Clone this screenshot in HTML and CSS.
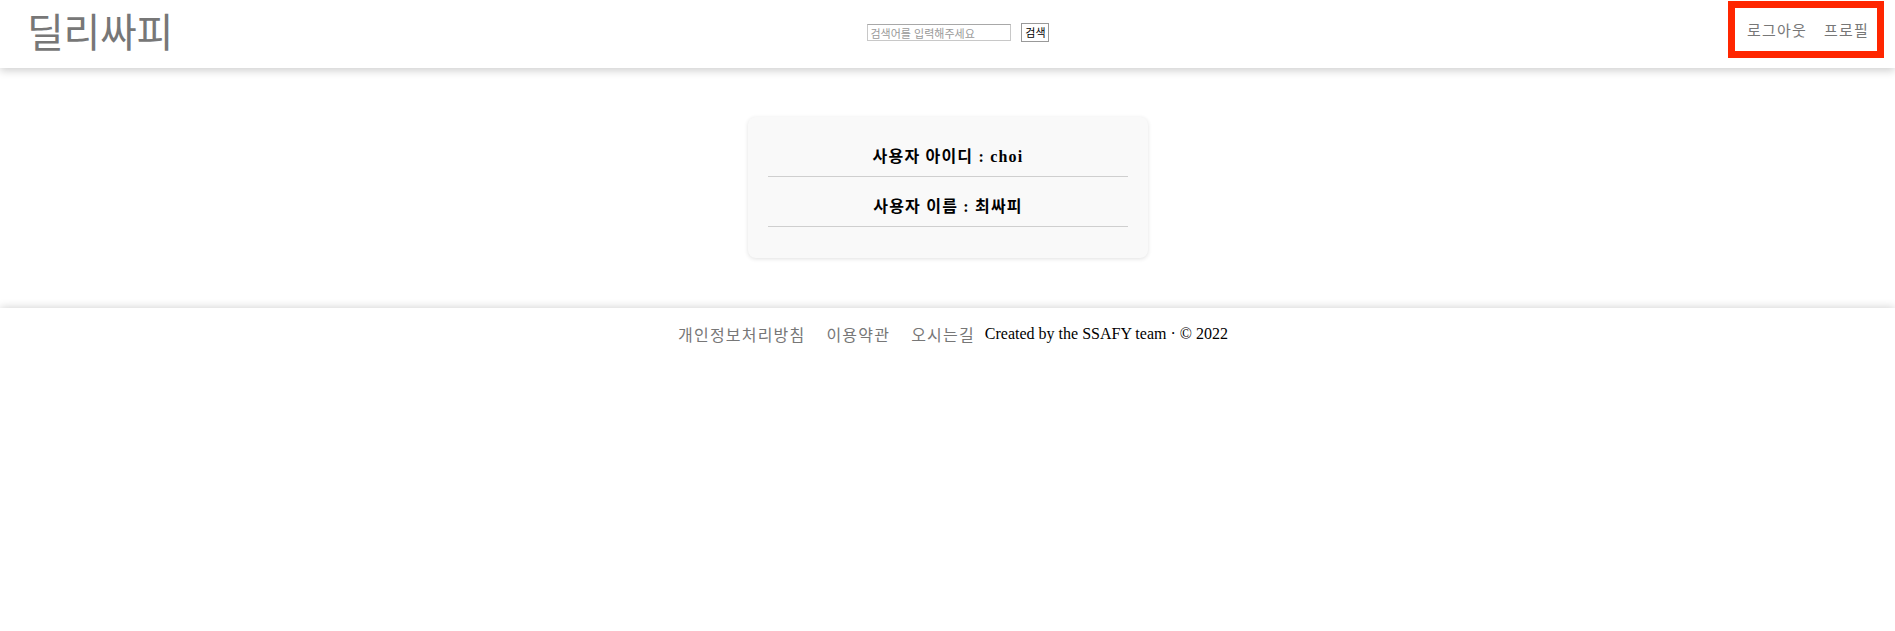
FILE: index.html
```html
<!DOCTYPE html>
<html lang="ko">
<head>
<meta charset="utf-8">
<title>딜리싸피</title>
<link rel="stylesheet" href="styles.css">
</head>
<body>
<header class="header">
  <a class="logo" href="#">딜리싸피</a>
  <form class="search">
    <input class="search-input" type="text" placeholder="검색어를 입력해주세요">
    <button class="search-btn" type="button">검색</button>
  </form>
  <nav class="nav">
    <a class="nav-link" href="#">로그아웃</a>
    <a class="nav-link" href="#">프로필</a>
  </nav>
</header>
<main class="main">
  <section class="card">
    <h3 class="card-row">사용자 아이디 : choi</h3>
    <h3 class="card-row">사용자 이름 : 최싸피</h3>
  </section>
</main>
<footer class="footer">
  <div class="footer-inner">
    <a class="footer-link" href="#">개인정보처리방침</a>
    <a class="footer-link" href="#">이용약관</a>
    <a class="footer-link" href="#">오시는길</a>
    <span class="copy">Created by the SSAFY team · © 2022</span>
  </div>
</footer>
</body>
</html>
```
FILE: styles.css
```css
* { box-sizing: border-box; }
html, body { margin: 0; padding: 0; background: #fff; }
body { font-family: "Liberation Serif", "Noto Sans CJK KR", serif; color: #000; }
a { text-decoration: none; }

.header {
  height: 68px;
  display: flex;
  align-items: center;
  justify-content: space-between;
  padding: 0 11px 0 27px;
  background: #fff;
  box-shadow: 0 3px 8px rgba(0,0,0,0.18);
  position: relative;
  z-index: 1;
}
.logo {
  font-family: "Noto Sans CJK KR", sans-serif;
  font-size: 40px;
  color: #777;
  line-height: 1;
  width: 146px;
  letter-spacing: -0.3px;
  margin-top: -8px;
  white-space: nowrap;
}
.search {
  display: flex;
  align-items: center;
  gap: 10px;
  margin: -3px 0 0 16px;
}
.search-input {
  width: 144px;
  height: 17px;
  border: 1px solid #c8c8c8;
  border-top-color: #a8a8a8;
  padding: 0 2px;
  font-family: "Noto Sans CJK KR", sans-serif;
  font-size: 11px;
  outline: none;
}
.search-input::placeholder { color: #999; }
.search-btn {
  height: 19px;
  width: 28px;
  padding: 0;
  border: 1px solid #999;
  background: #fff;
  font-family: "Noto Sans CJK KR", sans-serif;
  font-size: 11px;
  color: #000;
  line-height: 1;
}
.nav {
  display: flex;
  align-items: center;
  gap: 17px;
  height: 57px;
  margin-top: -9px;
  padding: 0 8px 0 12px;
  border: 7px solid #ff2600;
}
.nav-link {
  font-family: "Noto Sans CJK KR", sans-serif;
  font-size: 15px;
  letter-spacing: 1.2px;
  color: #777;
}

.main {
  padding: 49px 0 50px;
  display: flex;
  justify-content: center;
}
.card {
  width: 400px;
  height: 141px;
  margin-left: 1px;
  padding: 10px 20px 30px;
  background: #f9f9f9;
  border-radius: 8px;
  box-shadow: 0 1px 4px rgba(0,0,0,0.12);
}
.card-row {
  margin: 0;
  height: 50px;
  padding-top: 20px;
  line-height: 20px;
  font-size: 16px;
  font-weight: bold;
  letter-spacing: 1.2px;
  text-align: center;
  border-bottom: 1px solid #cfcfcf;
}

.footer {
  height: 51px;
  background: #fff;
  box-shadow: 0 0 9px rgba(0,0,0,0.2);
  display: flex;
  align-items: center;
  justify-content: center;
}
.footer-inner {
  display: flex;
  align-items: center;
}
.footer-link {
  font-family: "Noto Sans CJK KR", sans-serif;
  font-size: 16px;
  letter-spacing: 1.2px;
  color: #777;
  padding: 0 10px 0 11px;
}
.copy {
  font-size: 16px;
  color: #000;
}
```
